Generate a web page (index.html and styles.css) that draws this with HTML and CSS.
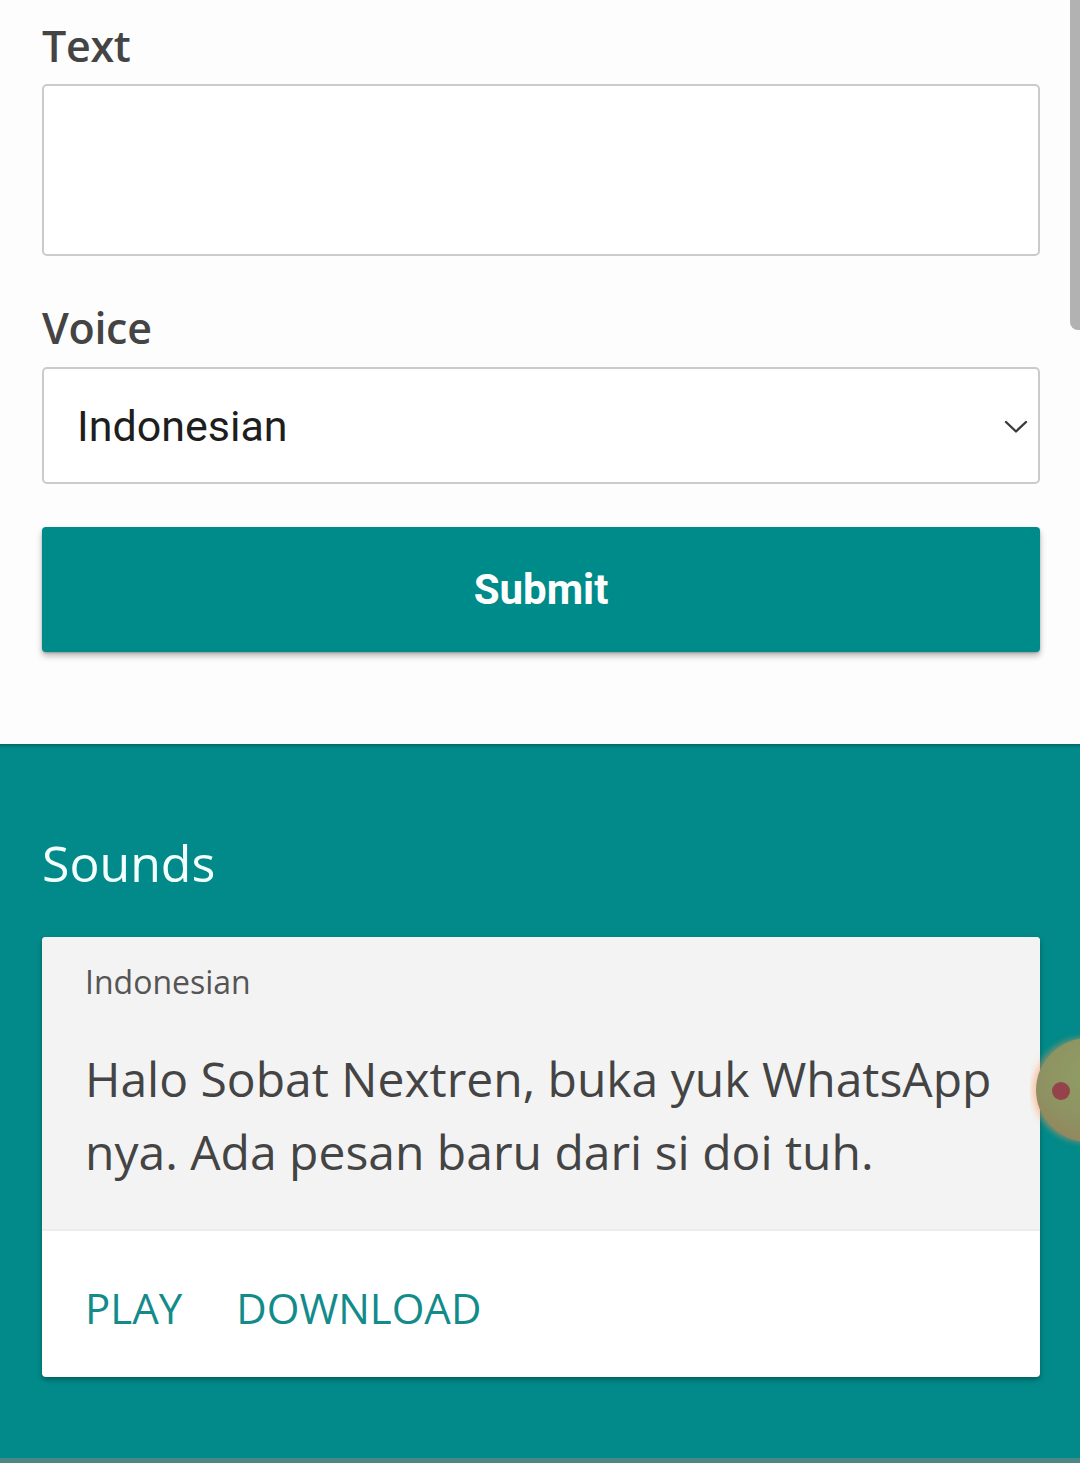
FILE: index.html
```html
<!DOCTYPE html>
<html lang="id">
<head>
<meta charset="utf-8">
<title>Text to Speech</title>
<link rel="stylesheet" href="styles.css">
</head>
<body>
<main class="page">
  <section class="form">
    <label class="label label-text" for="txt">Text</label>
    <textarea id="txt" class="textarea"></textarea>
    <label class="label label-voice" for="voice">Voice</label>
    <div class="select">
      <span class="select-value">Indonesian</span>
      <svg class="chevron" viewBox="0 0 24 14" width="24" height="14" aria-hidden="true">
        <path d="M2 2 L12 11.5 L22 2" fill="none" stroke="#3a3a3a" stroke-width="2.4" stroke-linecap="round" stroke-linejoin="round"/>
      </svg>
    </div>
    <button class="submit" type="button">Submit</button>
  </section>
  <section class="sounds">
    <h2 class="sounds-title">Sounds</h2>
    <article class="card">
      <div class="card-body">
        <div class="card-lang">Indonesian</div>
        <p class="card-text">Halo Sobat Nextren, buka yuk WhatsApp nya. Ada pesan baru dari si doi tuh.</p>
      </div>
      <div class="card-actions">
        <a class="action" href="#">PLAY</a>
        <a class="action" href="#">DOWNLOAD</a>
      </div>
    </article>
  </section>
</main>
<div class="scrollbar"></div>
<div class="bubble-clip"><div class="bubble"><span class="bubble-dot"></span></div></div>
</body>
</html>
```
FILE: styles.css
```css
* { box-sizing: border-box; }
html, body { margin: 0; padding: 0; }
body {
  width: 1080px;
  min-height: 1463px;
  background: #fdfdfd;
  font-family: "Open Sans", "Noto Sans", sans-serif;
  overflow: hidden;
  position: relative;
}
.page { display: flex; flex-direction: column; }

.form {
  display: flex;
  flex-direction: column;
  padding: 17px 40px 0 42px;
}
.label {
  font-family: "Open Sans", sans-serif;
  font-weight: 600;
  font-size: 43px;
  line-height: 58px;
  color: #444;
  letter-spacing: -0.3px;
}
.textarea {
  margin-top: 9px;
  height: 172px;
  width: 100%;
  border: 2px solid #cbcbcb;
  border-radius: 5px;
  background: #fff;
  resize: none;
  outline: none;
}
.label-voice { margin-top: 43px; }
.select {
  margin-top: 10px;
  height: 117px;
  border: 2px solid #cbcbcb;
  border-radius: 5px;
  background: #fff;
  display: flex;
  align-items: center;
  justify-content: space-between;
  padding: 0 10px 0 33px;
}
.select-value {
  font-family: Roboto, sans-serif;
  font-size: 43px;
  color: #1e1e1e;
}
.chevron { margin-top: 2px; }
.submit {
  margin-top: 43px;
  height: 125px;
  width: 100%;
  border: none;
  border-radius: 4px;
  background: #008b8b;
  color: #fff;
  font-family: Roboto, sans-serif;
  font-weight: 700;
  font-size: 42px;
  box-shadow: 0 4px 6px rgba(0,0,0,0.28), 0 1px 2px rgba(0,0,0,0.2);
}

.sounds {
  margin-top: 92px;
  background: #018a89;
  padding: 85px 40px 80px 42px;
  border-bottom: 5px solid #4e8686;
  min-height: 719px;
  position: relative;
}
.sounds::before {
  content: "";
  position: absolute;
  left: 0; right: 0; top: 0;
  height: 4px;
  background: linear-gradient(rgba(0,60,60,0.45), rgba(0,60,60,0));
}
.sounds-title {
  margin: 0;
  font-weight: 400;
  font-size: 50px;
  line-height: 68px;
  color: #f4ffff;
}
.card {
  margin-top: 40px;
  border-radius: 4px;
  overflow: hidden;
  background: #fff;
  box-shadow: 0 3px 5px rgba(0,0,0,0.3);
}
.card-body {
  background: #f3f3f3;
  padding: 23px 40px 42px 43px;
  height: 292px;
}
.card-lang {
  font-size: 32px;
  line-height: 44px;
  color: #555;
}
.card-text {
  margin: 38px 0 0;
  font-size: 48px;
  line-height: 73px;
  color: #444;
  letter-spacing: 0;
}
.card-actions {
  height: 148px;
  border-top: 2px solid #ececec;
  display: flex;
  align-items: center;
  gap: 54px;
  padding: 6px 43px 0;
}
.action {
  font-size: 42px;
  color: #138b8b;
  text-decoration: none;
}

.scrollbar {
  position: absolute;
  top: 0;
  right: 0;
  width: 10px;
  height: 330px;
  background: #b2b2b2;
  border-radius: 0 0 0 8px;
}
.bubble-clip {
  position: absolute;
  left: 1030px;
  top: 1030px;
  width: 50px;
  height: 120px;
  overflow: hidden;
}
.bubble {
  position: absolute;
  left: 6px;
  top: 8px;
  width: 104px;
  height: 104px;
  border-radius: 50%;
  background: radial-gradient(circle at 50% 35%, #909d64 0%, #8e9262 55%, #977d5c 100%);
  box-shadow: -3px 0 6px rgba(255,150,90,0.55);
}
.bubble-dot {
  position: absolute;
  left: 16px;
  top: 44px;
  width: 18px;
  height: 18px;
  border-radius: 50%;
  background: #95434a;
}
```
